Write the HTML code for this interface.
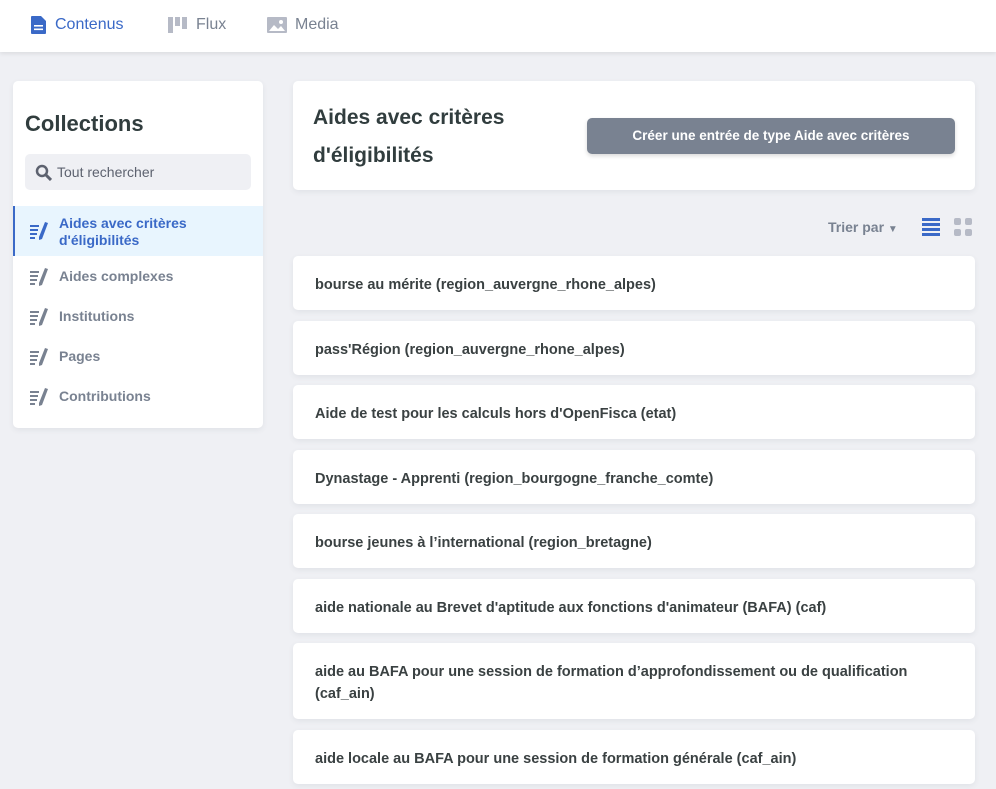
<!DOCTYPE html>
<html><head><meta charset="utf-8"><style>
*{box-sizing:border-box;margin:0;padding:0}
body{width:996px;height:789px;overflow:hidden;background:#eff0f4;font-family:"Liberation Sans",sans-serif;color:#313d3e;position:relative}
.top{position:absolute;left:0;top:0;width:996px;height:52px;background:#fff;box-shadow:0 2px 4px rgba(0,0,0,.08)}
.nav{position:absolute;top:16px;font-size:16px;display:flex;align-items:center;gap:8px;color:#798291}
.nav.a{color:#3a69c7}
.card{position:absolute;background:#fff;border-radius:5px;box-shadow:0 2px 6px rgba(68,74,87,.08)}
.side h1{position:absolute;left:12px;top:30px;font-size:22px;font-weight:bold}
.search{position:absolute;left:12px;top:73px;width:226px;height:36px;background:#eff0f4;border-radius:5px;font-size:14px;color:#5d626f;padding:10px 0 0 32px}
.item{position:absolute;left:0;width:250px;font-size:14px;font-weight:bold;color:#798291;padding-left:46px}
.item svg{position:absolute;left:17px;top:0}
.item.a{background:#e8f5fe;color:#3a69c7;border-left:2px solid #3a69c7;padding-left:44px}
.e{left:293px;width:682px;font-size:14.5px;font-weight:bold;padding:18px 22px;line-height:22px;color:#3a4142}
</style></head><body>
<div class="top">
<div class="nav a" style="left:31px"><svg width="16" height="18" viewBox="0 0 16 18"><path d="M1 0h9l5 5v12a1 1 0 0 1-1 1H1a1 1 0 0 1-1-1V1a1 1 0 0 1 1-1z" fill="#3a69c7"/><rect x="3" y="9" width="9" height="1.6" fill="#fff"/><rect x="3" y="12.5" width="9" height="1.6" fill="#fff"/></svg>Contenus</div>
<div class="nav" style="left:168px"><svg width="20" height="16"><rect x="0" y="0" width="5" height="16" fill="#b6bac6"/><rect x="7" y="0" width="5" height="9" fill="#b6bac6"/><rect x="14" y="0" width="5" height="12" fill="#b6bac6"/></svg>Flux</div>
<div class="nav" style="left:267px"><svg width="20" height="16"><rect x="0" y="0" width="20" height="16" rx="1" fill="#b6bac6"/><path d="M2 14l5-6 4 4 3-3 4 5z" fill="#fff"/><circle cx="14" cy="5" r="2" fill="#fff"/></svg>Media</div>
</div>
<div class="card side" style="left:13px;top:81px;width:250px;height:347px">
<h1>Collections</h1>
<div class="search"><svg style="position:absolute;left:10px;top:10px" width="17" height="17"><circle cx="7" cy="7" r="5" stroke="#5d626f" stroke-width="2.5" fill="none"/><path d="M11 11l5 5" stroke="#5d626f" stroke-width="3"/></svg>Tout rechercher</div>
<div class="item a" style="top:125px;height:50px;padding-top:9px;line-height:17px"><svg style="top:16px;left:15px" width="20" height="18"><g fill="#3a69c7"><rect x="0" y="3" width="9" height="2"/><rect x="0" y="7" width="8" height="2"/><rect x="0" y="11" width="7" height="2"/><rect x="0" y="15" width="5" height="2"/><path d="M15 0l3 1-6 16-3 1 0-3z"/></g></svg>Aides avec critères<br>d'éligibilités</div>
<div class="item" style="top:187px">
<svg width="20" height="18"><g fill="#798291"><rect x="0" y="3" width="9" height="2"/><rect x="0" y="7" width="8" height="2"/><rect x="0" y="11" width="7" height="2"/><rect x="0" y="15" width="5" height="2"/><path d="M15 0l3 1-6 16-3 1 0-3z"/></g></svg>Aides complexes</div>
<div class="item" style="top:227px"><svg width="20" height="18"><g fill="#798291"><rect x="0" y="3" width="9" height="2"/><rect x="0" y="7" width="8" height="2"/><rect x="0" y="11" width="7" height="2"/><rect x="0" y="15" width="5" height="2"/><path d="M15 0l3 1-6 16-3 1 0-3z"/></g></svg>Institutions</div>
<div class="item" style="top:267px"><svg width="20" height="18"><g fill="#798291"><rect x="0" y="3" width="9" height="2"/><rect x="0" y="7" width="8" height="2"/><rect x="0" y="11" width="7" height="2"/><rect x="0" y="15" width="5" height="2"/><path d="M15 0l3 1-6 16-3 1 0-3z"/></g></svg>Pages</div>
<div class="item" style="top:307px"><svg width="20" height="18"><g fill="#798291"><rect x="0" y="3" width="9" height="2"/><rect x="0" y="7" width="8" height="2"/><rect x="0" y="11" width="7" height="2"/><rect x="0" y="15" width="5" height="2"/><path d="M15 0l3 1-6 16-3 1 0-3z"/></g></svg>Contributions</div>
</div>
<div class="card" style="left:293px;top:81px;width:682px;height:109px">
<div style="position:absolute;left:20px;top:18px;font-size:21px;font-weight:bold;line-height:38px">Aides avec critères<br>d'éligibilités</div>
<div style="position:absolute;left:294px;top:37px;width:368px;height:36px;background:#798291;border-radius:5px;color:#fff;font-size:13.5px;font-weight:bold;text-align:center;line-height:36px;box-shadow:0 2px 4px rgba(0,0,0,.15)">Créer une entrée de type Aide avec critères</div>
</div>
<div style="position:absolute;left:828px;top:219px;font-size:14px;font-weight:bold;color:#798291">Trier par <span style="font-size:10px">▼</span></div>
<svg style="position:absolute;left:922px;top:218px" width="18" height="18"><g fill="#3a69c7"><rect y="0" width="18" height="3"/><rect y="5" width="18" height="3"/><rect y="10" width="18" height="3"/><rect y="15" width="18" height="3"/></g></svg>
<svg style="position:absolute;left:954px;top:218px" width="18" height="18"><g fill="#b6bac6"><rect x="0" y="0" width="7" height="7" rx="2"/><rect x="11" y="0" width="7" height="7" rx="2"/><rect x="0" y="11" width="7" height="7" rx="2"/><rect x="11" y="11" width="7" height="7" rx="2"/></g></svg>
<div class="card e" style="top:256px;height:54px">bourse au mérite (region_auvergne_rhone_alpes)</div>
<div class="card e" style="top:321px;height:54px">pass'Région (region_auvergne_rhone_alpes)</div>
<div class="card e" style="top:385px;height:54px">Aide de test pour les calculs hors d'OpenFisca (etat)</div>
<div class="card e" style="top:450px;height:54px">Dynastage - Apprenti (region_bourgogne_franche_comte)</div>
<div class="card e" style="top:514px;height:54px">bourse jeunes à l’international (region_bretagne)</div>
<div class="card e" style="top:579px;height:54px">aide nationale au Brevet d'aptitude aux fonctions d'animateur (BAFA) (caf)</div>
<div class="card e" style="top:643px;height:76px">aide au BAFA pour une session de formation d’approfondissement ou de qualification<br>(caf_ain)</div>
<div class="card e" style="top:730px;height:54px">aide locale au BAFA pour une session de formation générale (caf_ain)</div>
</body></html>
